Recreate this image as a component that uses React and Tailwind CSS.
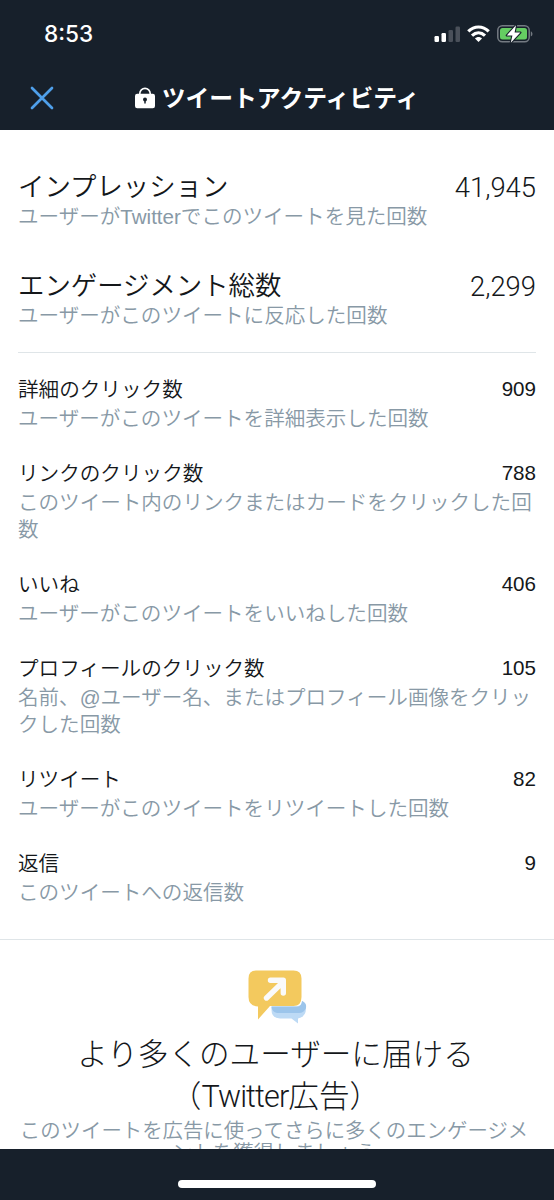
import React from "react";

const totals = [
  {
    title: "インプレッション",
    note: "ユーザーがTwitterでこのツイートを見た回数",
    value: "41,945",
  },
  {
    title: "エンゲージメント総数",
    note: "ユーザーがこのツイートに反応した回数",
    value: "2,299",
  },
];

const details = [
  {
    title: "詳細のクリック数",
    note: "ユーザーがこのツイートを詳細表示した回数",
    value: "909",
  },
  {
    title: "リンクのクリック数",
    note: "このツイート内のリンクまたはカードをクリックした回数",
    value: "788",
  },
  {
    title: "いいね",
    note: "ユーザーがこのツイートをいいねした回数",
    value: "406",
  },
  {
    title: "プロフィールのクリック数",
    note: "名前、@ユーザー名、またはプロフィール画像をクリックした回数",
    value: "105",
  },
  {
    title: "リツイート",
    note: "ユーザーがこのツイートをリツイートした回数",
    value: "82",
  },
  { title: "返信", note: "このツイートへの返信数", value: "9" },
];

function StatusBar() {
  return (
    <div className="flex h-[66px] items-end justify-between pl-[44px] pr-[20px]">
      <span className="h-[44px] font-['Inter'] text-[22.6px] font-medium leading-[24px]">
        8:53
      </span>
      <svg className="mb-[22px] h-5 w-[102px]" viewBox="0 0 102 20">
        {/* signal */}
        <rect x="2.5" y="12" width="4.5" height="6" rx="1.2" fill="#fff" />
        <rect x="9.5" y="9" width="4.5" height="9" rx="1.2" fill="#fff" />
        <rect x="16.5" y="6" width="4.5" height="12" rx="1.2" fill="#4a505a" />
        <rect x="23.5" y="2.5" width="4.5" height="15.5" rx="1.2" fill="#4a505a" />
        {/* wifi */}
        <g fill="none" stroke="#fff" strokeWidth="3.2">
          <path d="M36.3 7.4 C42.3 1.5 50.7 1.5 56.7 7.4" />
          <path d="M40 11.6 C44 7.9 49 7.9 53 11.6" />
        </g>
        <path d="M43 14.4 C45 12.4 48 12.4 50 14.4 L46.5 18 Z" fill="#fff" />
        {/* battery */}
        <rect x="65.8" y="1.8" width="31.4" height="16" rx="4.5" fill="none" stroke="#747a82" strokeWidth="1.5" />
        <rect x="68" y="4" width="27" height="11.6" rx="2.5" fill="#65cd62" />
        <path d="M98.8 7.2 C101 8.4 101 11.4 98.8 12.6 Z" fill="#747a82" />
        <path
          d="M84 1.2 L74.8 11.4 H80.4 L78.8 18.8 L88.4 8.6 H82.6 Z"
          fill="#fff"
          stroke="#17202b"
          strokeWidth="2.2"
          strokeLinejoin="round"
          paintOrder="stroke"
        />
      </svg>
    </div>
  );
}

function LockIcon() {
  return (
    <svg className="h-[22px] w-[20px]" viewBox="0 0 20 22">
      <path d="M4.8 8 V6.6 a5.2 5.2 0 0 1 10.4 0 V8" fill="none" stroke="#fff" strokeWidth="1.6" />
      <rect x="0" y="6.8" width="20" height="14.4" rx="2.2" fill="#fff" />
      <circle cx="10" cy="12.6" r="2" fill="#17202b" />
      <path d="M10 13 V16.6" stroke="#17202b" strokeWidth="1.5" />
    </svg>
  );
}

function PromoteIcon() {
  return (
    <svg className="h-[54px] w-[60px]" viewBox="0 0 60 54">
      <path
        d="M24.5 36 H50 Q55 36 55 31 Q59.5 33 59 38 Q59 47 51 48.5 V53.5 L44.5 48.5 H33 Q24.5 48 24.5 40 Z"
        fill="#bddaf5"
      />
      <path d="M24.5 37 H50 Q55 36 55 31 Q60 33 59 38 Q57 43 52 43 H30 Q25 42 24.5 37 Z" fill="#9cc5eb" />
      <path
        d="M9 0.5 H46.5 Q54.5 0.5 54.5 8.5 V27 Q54.5 36 46.5 36 H23 L11 49.5 V36.5 Q1.5 36 1.5 27 V8.5 Q1.5 0.5 9 0.5 Z"
        fill="#f3c95e"
      />
      <path
        d="M19.5 28 L36 12 M23.5 10.2 H36.3 V23"
        fill="none"
        stroke="#fafafa"
        strokeWidth="5.4"
        strokeLinecap="round"
        strokeLinejoin="round"
      />
    </svg>
  );
}

export default function App() {
  return (
    <div className="flex h-[1200px] w-[554px] flex-col overflow-hidden bg-white font-['Liberation_Sans','Noto_Sans_CJK_JP',sans-serif] text-[#14171a]">
      <header className="h-[130px] shrink-0 bg-[#17202b] text-white">
        <StatusBar />
        <div className="relative flex h-16 items-center justify-center">
          <svg className="absolute left-[30px] top-[20px] h-6 w-6" viewBox="0 0 24 24">
            <path d="M2 2 L22 22 M22 2 L2 22" stroke="#4f9fea" strokeWidth="2.7" strokeLinecap="round" />
          </svg>
          <LockIcon />
          <h1 className="ml-[7px] mt-[2px] whitespace-nowrap text-[23.8px] font-bold leading-[28px]">
            ツイートアクティビティ
          </h1>
        </div>
      </header>

      <main className="min-h-0 flex-1 overflow-hidden pt-[41px]">
        <section className="mx-[18px] flex h-[182px] flex-col gap-[26px] border-b border-[#dfe5e8]">
          {totals.map((row) => (
            <div key={row.title} className="h-[73px] shrink-0">
              <div className="flex h-8 items-center justify-between text-[26.4px] font-[350] leading-8">
                <span>{row.title}</span>
                <span className="pt-[2px] font-['Roboto'] text-[27.4px] font-light">
                  {row.value}
                </span>
              </div>
              <p className="text-[20.55px] font-[350] leading-[27px] text-[#8899a6]">
                {row.note}
              </p>
            </div>
          ))}
        </section>

        <section className="mx-[18px] flex h-[586px] flex-col gap-[28px] pt-[23px]">
          {details.map((row) => (
            <div key={row.title}>
              <div className="flex h-[27px] items-center justify-between text-[20.6px] font-[350] leading-[27px]">
                <span>{row.title}</span>
                <span className="pb-[2px]">{row.value}</span>
              </div>
              <p className="mt-[2px] text-[20.55px] font-[350] leading-[27px] text-[#8899a6]">
                {row.note}
              </p>
            </div>
          ))}
        </section>

        <section className="flex flex-col items-center border-t border-[#dfe5e8] pt-[30px] text-center font-[350]">
          <PromoteIcon />
          <h2 className="mr-[3px] mt-[10px] font-['Roboto','Noto_Sans_CJK_JP',sans-serif] text-[30.6px] font-light leading-[42px]">
            より多くのユーザーに届ける
            <br />
            （<span className="tracking-[-0.9px]">Twitter</span>広告）
          </h2>
          <p className="mr-[6px] mt-[2px] w-[520px] text-[20.4px] leading-[22px] text-[#8899a6]">
            このツイートを広告に使ってさらに多くのエンゲージメントを獲得しましょう
          </p>
        </section>
      </main>

      <footer className="flex h-[51px] shrink-0 justify-center bg-[#17202b] pt-[31px]">
        <div className="h-2 w-[198px] rounded-full bg-white" />
      </footer>
    </div>
  );
}
